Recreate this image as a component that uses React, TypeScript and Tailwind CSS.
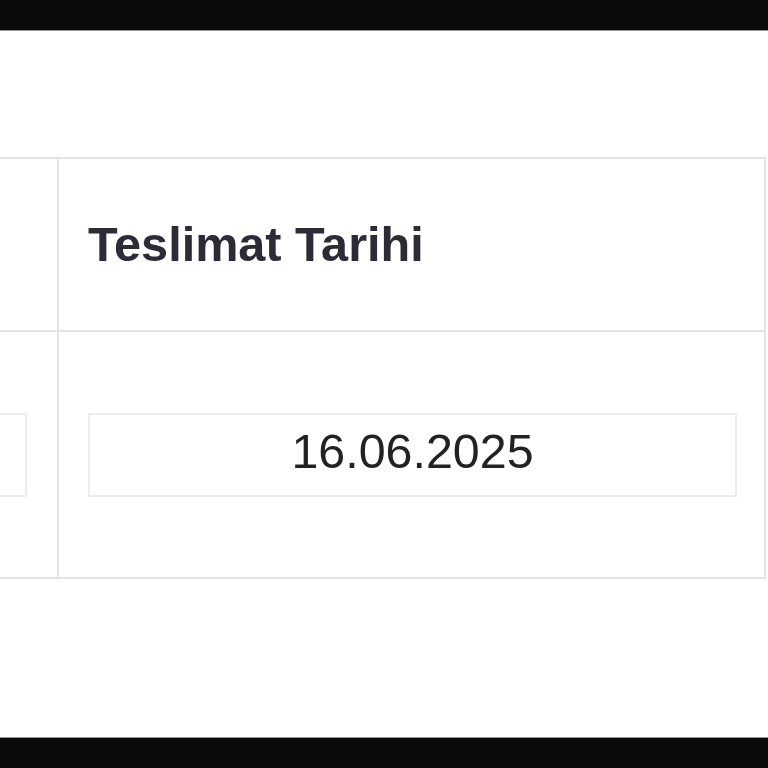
import React from "react";

export default function App() {
  const font = { fontFamily: '"Liberation Sans", Arial, sans-serif' };
  return (
    <div className="h-[768px] w-[768px] flex flex-col bg-white overflow-hidden" style={font}>
      <div className="h-[31px] shrink-0 bg-[#0b0b0b] border-b border-[#9a9a9a]" />
      <div className="flex-1 overflow-hidden pt-[126px]">
        <div className="ml-[-245px] w-[1011px] border-2 border-[#e3e3e3] grid grid-cols-[302px_705px] grid-rows-[173px_245px]">
          <div className="border-r-2 border-b-2 border-[#e3e3e3]" />
          <div className="border-b-2 border-[#e3e3e3] flex items-center pl-[29px]">
            <span className="text-[48.6px] font-bold text-[#2c2c36] leading-normal">Teslimat Tarihi</span>
          </div>
          <div className="border-r-2 border-[#e3e3e3] flex items-center pl-[30px] pr-[30px]">
            <div className="h-[84px] w-full border-2 border-[#ececec]" />
          </div>
          <div className="flex items-center pl-[29px] pr-[27px]">
            <div className="h-[84px] w-full border-2 border-[#ececec] flex items-center justify-center pb-[6px]">
              <span className="text-[48.4px] text-[#222] leading-normal">16.06.2025</span>
            </div>
          </div>
        </div>
      </div>
      <div className="h-[31px] shrink-0 bg-[#0b0b0b] border-t border-[#9a9a9a]" />
    </div>
  );
}
